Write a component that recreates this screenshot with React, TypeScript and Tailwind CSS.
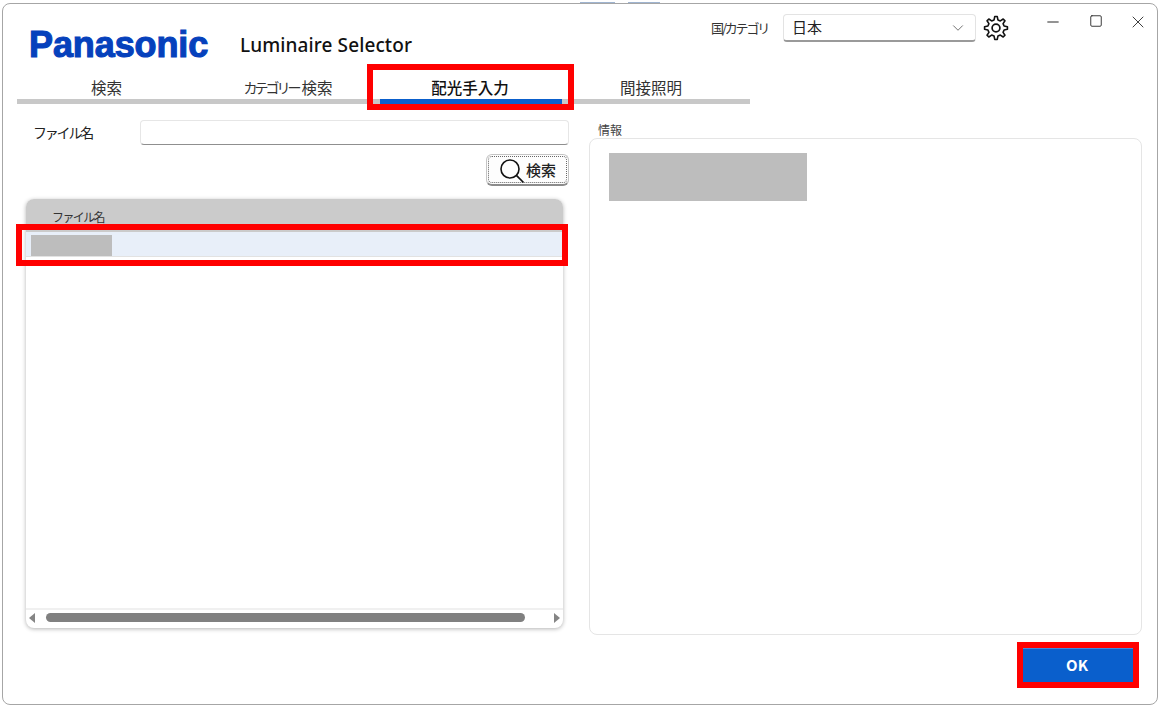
import { ChevronDown, Minus, Square, X } from "lucide-react";

const jp = "font-['Noto_Sans_CJK_JP','Noto_Sans',sans-serif]";

function gearPoints(cx: number, cy: number, outer: number, inner: number, teeth: number) {
  const pts: string[] = [];
  const step = (Math.PI * 2) / teeth;
  for (let i = 0; i < teeth; i++) {
    const a = i * step - Math.PI / 2;
    const list: [number, number][] = [
      [inner, a - step * 0.3],
      [outer, a - step * 0.14],
      [outer, a + step * 0.14],
      [inner, a + step * 0.3],
    ];
    for (const [r, t] of list) {
      pts.push(`${(cx + r * Math.cos(t)).toFixed(2)},${(cy + r * Math.sin(t)).toFixed(2)}`);
    }
  }
  return pts.join(" ");
}

function GearIcon() {
  return (
    <svg width="26" height="26" viewBox="0 0 26 26" fill="none" className="mt-[11px] ml-[7px] shrink-0">
      <polygon points={gearPoints(13, 13, 11.5, 8.3, 8)} stroke="#111" strokeWidth="1.6" strokeLinejoin="round" />
      <circle cx="13" cy="13" r="3.9" stroke="#111" strokeWidth="1.7" />
    </svg>
  );
}

function SearchIcon() {
  return (
    <svg width="26" height="26" viewBox="0 0 26 26" fill="none" className="shrink-0">
      <circle cx="11" cy="11" r="9" stroke="#111" strokeWidth="1.6" />
      <line x1="17.4" y1="17.4" x2="24.5" y2="24.5" stroke="#111" strokeWidth="1.7" />
    </svg>
  );
}

function Tab({ children, active, width }: { children: React.ReactNode; active?: boolean; width: string }) {
  return (
    <div
      className={`${width} flex items-end justify-center text-[15.5px] leading-[22px] ${
        active
          ? "h-[35px] -mb-[5px] border-b-[5px] border-[#0a5fcc] font-medium text-[#111] pb-[1px] pr-[2px]"
          : "h-[30px] text-[#333] pb-[1px] pr-[2px]"
      }`}
    >
      {children}
    </div>
  );
}

export default function App() {
  return (
    <div className={`w-[1161px] h-[706px] bg-white pt-[3px] pl-[2px] pr-[3px] pb-[1px] relative overflow-hidden ${jp}`}>
      <div className="absolute left-[580px] top-[2px] w-[35px] h-[1px] bg-[#9fb4d0]" />
      <div className="absolute left-[628px] top-[2px] w-[32px] h-[1px] bg-[#9fb4d0]" />

      <div className="h-full border border-[#a6a6a6] rounded-lg bg-white flex flex-col">
        {/* header */}
        <div className="h-[70px] flex items-start shrink-0">
          <div className="ml-[26px] mt-[21px] w-[181px] font-['Liberation_Sans',sans-serif] text-[36px] leading-[40px] font-bold text-[#0641bc] [-webkit-text-stroke:1.1px_#0641bc] tracking-[-0.1px]">
            Panasonic
          </div>
          <div className="ml-[30px] mt-[28px] font-['Noto_Sans',sans-serif] text-[19px] leading-[26px] font-medium text-[#111] tracking-[0.1px]">
            Luminaire Selector
          </div>
          <div className="ml-auto flex items-start">
            <div className="mt-[15px] text-[13px] leading-[18px] text-[#333] tracking-[-2.2px]">国/カテゴリ</div>
            <div className="mt-[10px] ml-[15px] w-[193px] h-[28px] rounded border border-[#e3e3e3] border-b-[2px] border-b-[#9a9a9a] flex items-center justify-between pl-[8px] pr-[8px] text-[15px] text-[#222]">
              <span>日本</span>
              <ChevronDown size={18} strokeWidth={1.1} className="text-[#555]" />
            </div>
            <GearIcon />
            <div className="w-[148px] pt-[9px] flex items-start text-[#222]">
              <Minus size={18} strokeWidth={1.3} className="ml-[35px]" />
              <Square size={14} strokeWidth={1.5} className="ml-[27px] mt-[1px]" />
              <X size={20} strokeWidth={1.05} className="ml-[25px] -mt-[1px]" />
            </div>
          </div>
        </div>

        {/* tabs */}
        <div className="ml-[14px] w-[733px] h-[30px] border-b-[5px] border-[#c8c8c8] flex shrink-0 box-content -mt-[5px]">
          <Tab width="w-[181px]">検索</Tab>
          <Tab width="w-[182px]">
            <span className="text-[14px] tracking-[-3px] mr-[3px]">カテゴリー</span>検索
          </Tab>
          <Tab width="w-[182px]" active>配光手入力</Tab>
          <Tab width="w-[182px]">
            <span className="mr-[2px]">間接照明</span>
          </Tab>
        </div>

        {/* body */}
        <div className="flex pt-[16px] ml-[23px] shrink-0">
          <div className="w-[543px] flex flex-col">
            <div className="flex items-center">
              <span className="ml-[7px] text-[14px] text-[#222] tracking-[-2.2px]">ファイル名</span>
              <div className="ml-auto w-[429px] h-[25px] rounded border border-[#e6e6e6] border-b-[#8f8f8f]" />
            </div>
            <button className="ml-auto mt-[9px] w-[83px] h-[32px] rounded-md border border-[#c4c4c4] border-b-[2px] border-b-[#8c8c8c] p-[1px] bg-[#fdfdfd]">
              <span className="w-full h-full border border-dotted border-[#666] flex items-center justify-center gap-[1px] text-[15px] font-medium text-[#222] rounded-sm pt-[2px]">
                <SearchIcon />
                検索
              </span>
            </button>
            <div className="mt-[13px] w-[537px] h-[429px] rounded-lg bg-white shadow-[0_1px_4px_rgba(0,0,0,0.3)] flex flex-col overflow-hidden">
              <div className="h-[33px] bg-[#cbcbcb] pl-[26px] pt-[9px] text-[12px] leading-[18px] text-[#333] tracking-[-1.6px] shrink-0">
                ファイル名
              </div>
              <div className="h-[25px] bg-[#e8eff9] border-b border-[#e2e2e2] flex items-end pl-[5px] shrink-0">
                <div className="w-[81px] h-[21px] bg-[#bdbdbd]" />
              </div>
              <div className="flex-1" />
              <div className="h-[20px] border-t-2 border-[#f0f0f0] flex items-start pt-[3px] shrink-0 pl-[3px] pr-[3px]">
                <div className="w-0 h-0 border-y-[5px] border-y-transparent border-r-[6px] border-r-[#858585]" />
                <div className="ml-[11px] w-[479px] h-[9px] rounded-full bg-[#808080]" />
                <div className="ml-auto w-0 h-0 border-y-[5px] border-y-transparent border-l-[6px] border-l-[#858585]" />
              </div>
            </div>
          </div>

          <div className="ml-[20px] mt-[2px] w-[553px] flex flex-col">
            <div className="h-[16px] ml-[9px] text-[12px] leading-[16px] text-[#444]">情報</div>
            <div className="h-[497px] rounded-lg border border-[#e5e5e5] pl-[19px] pt-[14px]">
              <div className="w-[198px] h-[48px] bg-[#bdbdbd]" />
            </div>
          </div>
        </div>

        {/* footer */}
        <div className="flex justify-end pr-[24px] mt-[13px]">
          <button className="w-[110px] h-[34px] bg-[#0a5fcc] border-t border-[#4a86d8] text-white text-[15px] font-bold pr-[2px]">
            OK
          </button>
        </div>
      </div>

      {/* annotation frames */}
      <div className="absolute left-[367px] top-[64px] w-[207px] h-[46px] border-[6px] border-[#ff0000] pointer-events-none" />
      <div className="absolute left-[16px] top-[224px] w-[552px] h-[42px] border-[6px] border-[#ff0000] pointer-events-none" />
      <div className="absolute left-[1017px] top-[642px] w-[122px] h-[46px] border-[6px] border-[#ff0000] pointer-events-none" />
    </div>
  );
}
